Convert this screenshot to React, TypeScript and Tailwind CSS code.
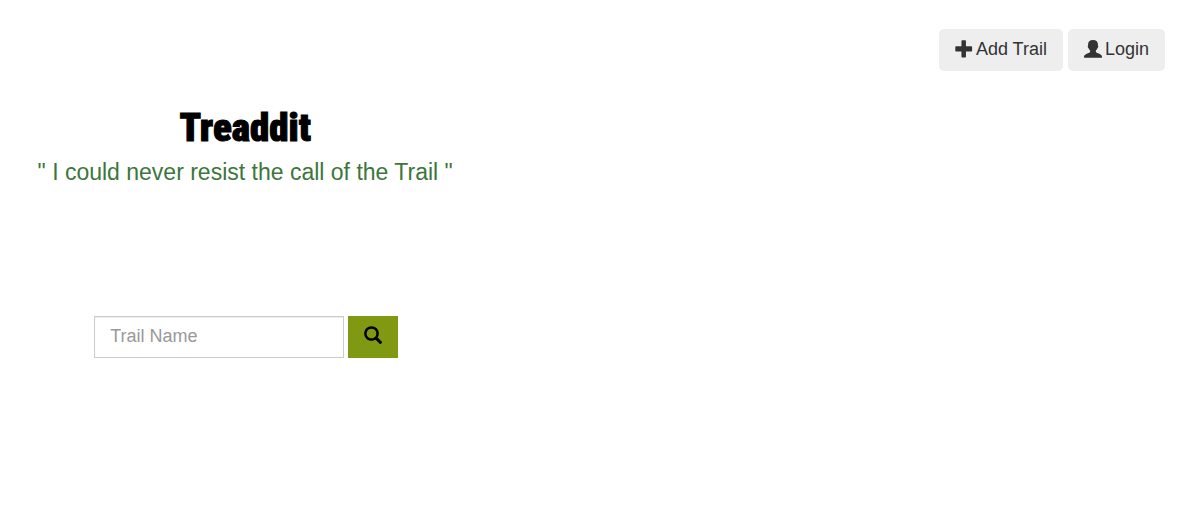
import type { ReactNode } from 'react';

function Glyph({ children }: { children: ReactNode }) {
  return (
    <svg viewBox="0 0 1200 1200" className="size-[18px] shrink-0" fill="currentColor" aria-hidden="true">
      <g transform="translate(0 1200) scale(1 -1)">{children}</g>
    </svg>
  );
}

function PlusIcon() {
  return (
    <Glyph>
      <path d="M480 1180h200q50 0 50 -50v-350h360q50 0 50 -50v-240q0 -50 -50 -50h-360v-350q0 -50 -50 -50h-200q-50 0 -50 50v350h-360q-50 0 -50 50v240q0 50 50 50h360v350q0 50 50 50z" />
    </Glyph>
  );
}

function UserIcon() {
  return (
    <Glyph>
      <path d="M600 1200q170 0 250 -80t80 -220q0 -50 -4 -80q30 -10 26 -60q-8 -80 -56 -105q-34 -95 -106 -155v-90q20 -50 100 -80q150 -55 230 -110q80 -50 80 -130v-80h-1200v80q0 80 80 130q80 55 230 110q80 30 100 80v90q-72 60 -106 155q-48 25 -56 105q-4 50 26 60q-4 30 -4 80q0 140 80 220t250 80z" />
    </Glyph>
  );
}

function SearchIcon() {
  return (
    <Glyph>
      <path d="M500 1191q100 0 191 -39t156.5 -104.5t104.5 -156.5t39 -191l-1 -2l1 -5q0 -141 -78 -262l275 -274q23 -26 22.5 -44.5t-22.5 -42.5l-59 -58q-26 -20 -46.5 -20t-39.5 20l-275 274q-119 -77 -261 -77l-5 1l-2 -1q-100 0 -191 39t-156.5 104.5t-104.5 156.5t-39 191t39 191t104.5 156.5t156.5 104.5t191 39zM500 1022q-88 0 -162 -43t-117 -117t-43 -162t43 -162t117 -117t162 -43t162 43t117 117t43 162t-43 162t-117 117t-162 43z" />
    </Glyph>
  );
}

function NavButton({ icon, children }: { icon: ReactNode; children: ReactNode }) {
  return (
    <button type="button" className="flex h-[42px] items-center gap-[3px] rounded-[5px] bg-[#eee] px-4 pb-[3px] text-lg text-[#333]">
      {icon}
      {children}
    </button>
  );
}

export default function App() {
  return (
    <div className="min-h-screen bg-white font-['Liberation_Sans',Arial,sans-serif]">
      <nav className="flex justify-end gap-[5px] pt-[29px] pr-[31px]">
        <NavButton icon={<PlusIcon />}>Add Trail</NavButton>
        <NavButton icon={<UserIcon />}>Login</NavButton>
      </nav>
      <main className="flex w-[41%] min-w-[440px] flex-col items-center pt-8">
        <h1 className="font-['Impact','Roboto_Condensed','Roboto',sans-serif] text-[39px] leading-[50px] font-black text-black [-webkit-text-stroke:1px_black]">
          Treaddit
        </h1>
        <p className="pt-[3px] text-[23px] leading-8 whitespace-nowrap text-[#3c763d]">" I could never resist the call of the Trail "</p>
        <form className="flex gap-1 pt-32 pl-0.5" onSubmit={(event) => event.preventDefault()}>
          <input
            type="text"
            aria-label="Trail Name"
            placeholder="Trail Name"
            className="h-[42px] w-[250px] border border-[#ccc] px-[15px] pb-0.5 text-lg text-[#555] shadow-[inset_0_1px_1px_rgba(0,0,0,0.075)] placeholder:text-[#999]"
          />
          <button type="submit" aria-label="Search" className="flex h-[42px] w-[50px] items-center justify-center bg-[#809912] pb-1 text-black">
            <SearchIcon />
          </button>
        </form>
      </main>
    </div>
  );
}
